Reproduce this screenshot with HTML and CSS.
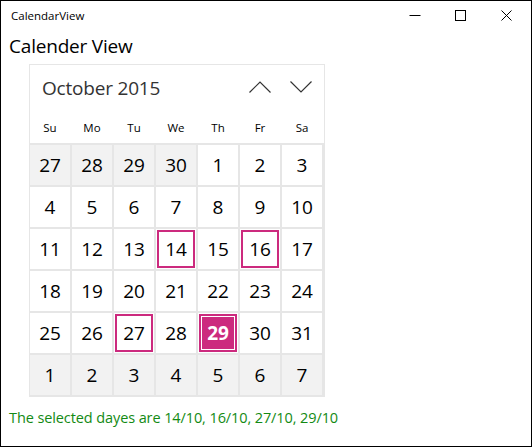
FILE: index.html
```html
<!DOCTYPE html>
<html>
<head>
<meta charset="utf-8">
<link rel="stylesheet" href="styles.css">
</head>
<body>
<div class="window">
  <div class="titlebar">
    <span class="wtitle">CalendarView</span>
    <div class="controls">
      <svg class="ctl" width="46" height="30" viewBox="0 0 46 30"><path d="M17.5 14.5h11" stroke="#000" stroke-width="1" fill="none"/></svg>
      <svg class="ctl" width="46" height="30" viewBox="0 0 46 30"><rect x="17.5" y="9.5" width="10" height="10" stroke="#000" stroke-width="1" fill="none"/></svg>
      <svg class="ctl" width="46" height="30" viewBox="0 0 46 30"><path d="M17.5 9.5l10 10M27.5 9.5l-10 10" stroke="#000" stroke-width="1" fill="none"/></svg>
    </div>
  </div>
  <div class="content">
    <h1 class="heading">Calender View</h1>
    <div class="calendar">
      <div class="cal-head">
        <span class="month">October 2015</span>
        <div class="nav">
          <svg width="24" height="14" viewBox="0 0 24 14"><path d="M1.5 12.5l10.5-10.5 10.5 10.5" stroke="#333" stroke-width="1.2" fill="none"/></svg>
          <svg width="24" height="14" viewBox="0 0 24 14"><path d="M1.5 1.5l10.5 10.5 10.5-10.5" stroke="#333" stroke-width="1.2" fill="none"/></svg>
        </div>
      </div>
      <div class="weekdays">
        <span>Su</span><span>Mo</span><span>Tu</span><span>We</span><span>Th</span><span>Fr</span><span>Sa</span>
      </div>
      <div class="grid">
        <div class="day out"><span>27</span></div>
        <div class="day out"><span>28</span></div>
        <div class="day out"><span>29</span></div>
        <div class="day out"><span>30</span></div>
        <div class="day"><span>1</span></div>
        <div class="day"><span>2</span></div>
        <div class="day"><span>3</span></div>

        <div class="day"><span>4</span></div>
        <div class="day"><span>5</span></div>
        <div class="day"><span>6</span></div>
        <div class="day"><span>7</span></div>
        <div class="day"><span>8</span></div>
        <div class="day"><span>9</span></div>
        <div class="day"><span>10</span></div>

        <div class="day"><span>11</span></div>
        <div class="day"><span>12</span></div>
        <div class="day"><span>13</span></div>
        <div class="day sel"><span>14</span></div>
        <div class="day"><span>15</span></div>
        <div class="day sel"><span>16</span></div>
        <div class="day"><span>17</span></div>

        <div class="day"><span>18</span></div>
        <div class="day"><span>19</span></div>
        <div class="day"><span>20</span></div>
        <div class="day"><span>21</span></div>
        <div class="day"><span>22</span></div>
        <div class="day"><span>23</span></div>
        <div class="day"><span>24</span></div>

        <div class="day"><span>25</span></div>
        <div class="day"><span>26</span></div>
        <div class="day sel"><span>27</span></div>
        <div class="day"><span>28</span></div>
        <div class="day today"><span>29</span></div>
        <div class="day"><span>30</span></div>
        <div class="day"><span>31</span></div>

        <div class="day out"><span>1</span></div>
        <div class="day out"><span>2</span></div>
        <div class="day out"><span>3</span></div>
        <div class="day out"><span>4</span></div>
        <div class="day out"><span>5</span></div>
        <div class="day out"><span>6</span></div>
        <div class="day out"><span>7</span></div>
      </div>
    </div>
    <p class="status">The selected dayes are 14/10, 16/10, 27/10, 29/10</p>
  </div>
</div>
</body>
</html>
```

FILE: styles.css
```css
* { box-sizing: border-box; }
html, body { margin: 0; padding: 0; background: #fff; }
body { font-family: "Open Sans", "Noto Sans", sans-serif; }

.window {
  width: 532px;
  height: 447px;
  border: 1px solid #000;
  background: #fff;
  display: flex;
  flex-direction: column;
}

.titlebar {
  height: 29px;
  display: flex;
  align-items: center;
  justify-content: space-between;
}
.wtitle {
  font-size: 11.5px;
  color: #000;
  padding-left: 10px;
  margin-top: -1px;
}
.controls { display: flex; align-self: flex-start; margin-right: 1px; }
.ctl { display: block; }

.content {
  padding: 0 0 0 8px;
}
.heading {
  margin: 2px 0 0 0;
  font-weight: 400;
  font-size: 19px;
  line-height: 28px;
  color: #000;
  letter-spacing: -0.2px;
}

.calendar {
  margin: 4px 0 0 20px;
  width: 296px;
  border: 1px solid #e6e6e6;
  border-bottom: none;
}
.cal-head {
  height: 46px;
  display: flex;
  align-items: center;
  justify-content: space-between;
  padding: 0 11px 0 12px;
}
.month {
  font-size: 19px;
  color: #333;
  letter-spacing: -0.2px;
}
.nav { display: flex; gap: 17px; margin-top: -2px; }
.nav svg { display: block; }

.weekdays {
  display: grid;
  grid-template-columns: repeat(7, 42px);
  height: 32px;
  align-items: center;
  margin-left: -1px;
}
.weekdays span {
  text-align: center;
  font-size: 11.5px;
  color: #000;
}

.grid {
  display: grid;
  grid-template-columns: repeat(7, 40px);
  grid-auto-rows: 40px;
  gap: 2px;
  padding: 2px 1px 2px 1px;
  margin: 0 -1px;
  background: #e6e6e6;
}
.day {
  background: #fff;
  padding: 1px;
  display: flex;
}
.day span {
  flex: 1;
  display: flex;
  align-items: center;
  justify-content: center;
  font-size: 19px;
  color: #000;
  padding-bottom: 1px;
}
.day.out { background: #f2f2f2; }
.day.sel span { border: 2px solid #cc2a7e; }
.day.today span {
  background: #cc2a7e;
  color: #fff;
  font-weight: 700;
  box-shadow: inset 0 0 0 2px #cc2a7e, inset 0 0 0 3px #fff;
}

.status {
  margin: 11px 0 0 0;
  font-size: 14.5px;
  color: #138a13;
  letter-spacing: -0.1px;
}
```
